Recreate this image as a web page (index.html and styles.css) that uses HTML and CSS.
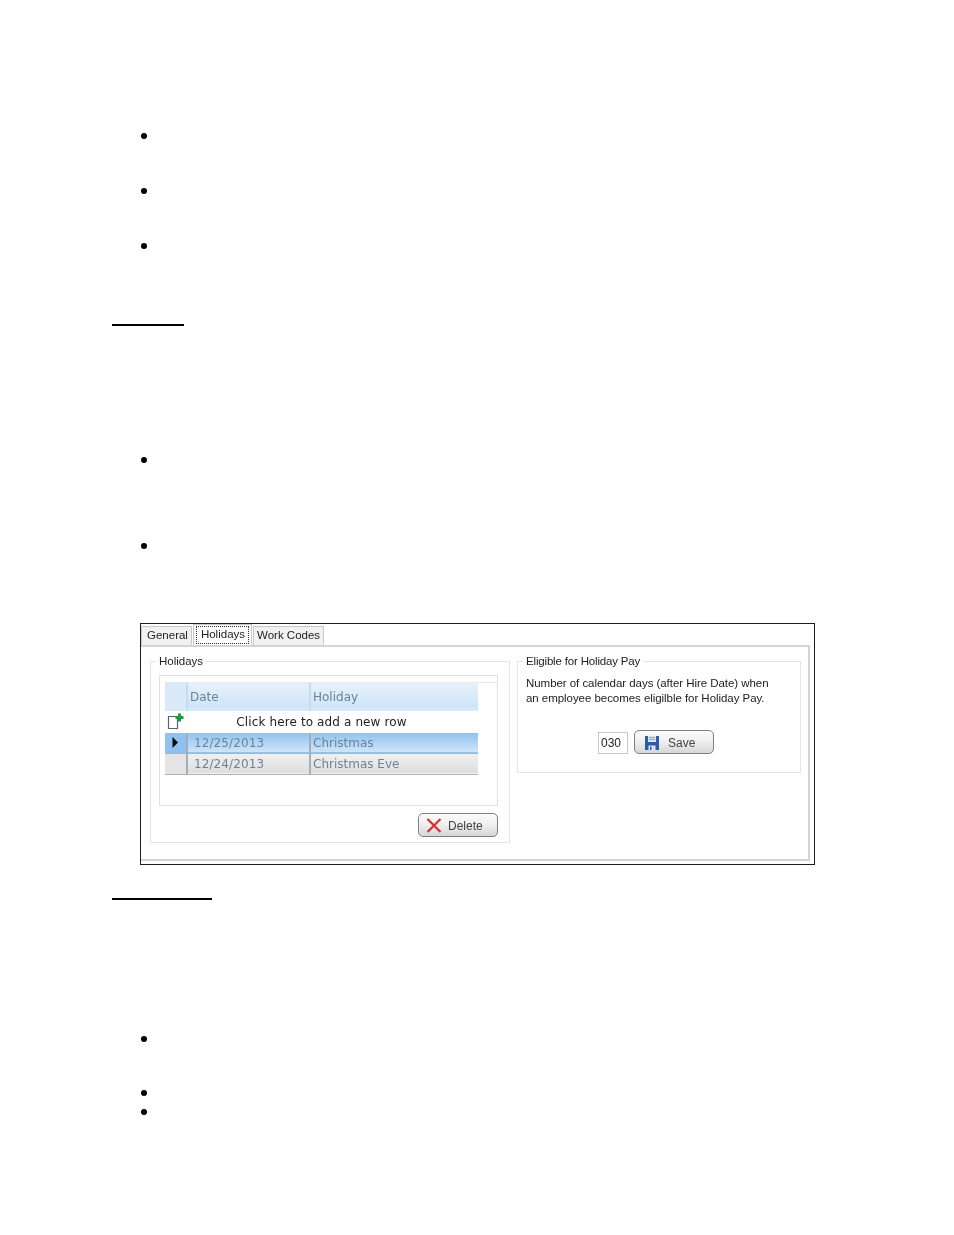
FILE: index.html
```html
<!DOCTYPE html>
<html lang="en">
<head>
  <meta charset="UTF-8">
  <title>Holidays</title>
  <link rel="stylesheet" href="styles.css">
</head>
<body>
  <ul class="bullets first">
    <li></li>
    <li class="wide"></li>
    <li class="wide"></li>
  </ul>

  <div class="rule rule-short"></div>

  <ul class="bullets second">
    <li></li>
    <li class="wider"></li>
  </ul>

  <div class="shot">
    <div class="tabs">
      <div class="tab">General</div>
      <div class="tab active"><span class="focus">Holidays</span></div>
      <div class="tab last">Work Codes</div>
    </div>

    <div class="pane">
      <fieldset class="group group-left">
        <legend>Holidays</legend>
        <div class="grid-box">
          <div class="grid-band"></div>
          <table class="grid">
            <tr class="head">
              <td class="sel"></td>
              <td class="date">Date</td>
              <td>Holiday</td>
            </tr>
            <tr class="add">
              <td class="sel">
                <svg width="17" height="17" viewBox="0 0 17 17">
                  <path d="M1.500 3.500h9v12h-9z" fill="#fff" stroke="#50667e" stroke-width="1.200"/>
                  <path d="M11 0.500h3v2.500h2.500v3H14v2.500h-3V6H8.500V3H11z" fill="#1c9a3c"/>
                </svg>
              </td>
              <td colspan="2">Click here to add a new row</td>
            </tr>
            <tr class="row current">
              <td class="sel">
                <svg width="7" height="11" viewBox="0 0 7 11"><path d="M0.500 0l5.500 5.500-5.500 5.500z" fill="#0b0b0b"/></svg>
              </td>
              <td class="date">12/25/2013</td>
              <td>Christmas</td>
            </tr>
            <tr class="row">
              <td class="sel"></td>
              <td class="date">12/24/2013</td>
              <td>Christmas Eve</td>
            </tr>
          </table>
        </div>
        <div class="actions">
          <button class="btn btn-delete" type="button">
            <svg width="16" height="15" viewBox="0 0 16 15">
              <path d="M1.500 1l13 13M14.500 1l-13 13" stroke="#d5322e" stroke-width="2.200" fill="none"/>
            </svg>
            Delete
          </button>
        </div>
      </fieldset>

      <fieldset class="group group-right">
        <legend>Eligible for Holiday Pay</legend>
        <p class="note">Number of calendar days (after Hire Date) when<br>an employee becomes eligilble for Holiday Pay.</p>
        <div class="pay-row">
          <div class="days">030</div>
          <button class="btn btn-save" type="button">
            <svg width="16" height="16" viewBox="0 0 16 16">
              <path d="M1 1h14v14H1z" fill="#2a5cab"/>
              <path d="M4 1h8v6H4z" fill="#dfe6f2"/>
              <path d="M5 2.500h6M5 4.500h6" stroke="#8ea3c6"/>
              <path d="M4.500 10.500h7V15h-7z" fill="#dfe5ef"/>
              <path d="M6 11.500h1.500V15H6z" fill="#2a5cab"/>
            </svg>
            Save
          </button>
        </div>
      </fieldset>
    </div>
  </div>

  <div class="rule rule-long"></div>

  <ul class="bullets third">
    <li></li>
    <li class="wide-less"></li>
    <li class="tight"></li>
  </ul>
</body>
</html>
```

FILE: styles.css
```css
* {
  box-sizing: border-box;
}

body {
  margin: 0;
  padding: 133px 0 0 112px;
  height: 1235px;
  background: #fff;
  color: #222;
  font-family: "Liberation Sans", Arial, sans-serif;
  font-size: 11.5px;
  overflow: hidden;
}

/* bullets: their text is blank in the page */
.bullets {
  list-style: none;
  margin: 0;
  padding: 0 0 0 29px;
}

.bullets li {
  width: 6px;
  height: 6px;
  margin-top: 48px;
  border-radius: 50%;
  background: #000;
}

.bullets li:first-child {
  margin-top: 0;
}

.bullets li.wide {
  margin-top: 49px;
}

.bullets li.wider {
  margin-top: 80px;
}

.bullets li.wide-less {
  margin-top: 48px;
}

.bullets li.tight {
  margin-top: 13px;
}

.second {
  margin-top: 131px;
}

.third {
  margin-top: 136px;
}

.rule {
  height: 2px;
  background: #000;
}

.rule-short {
  width: 72px;
  margin-top: 75px;
}

.rule-long {
  width: 100px;
  margin-top: 33px;
}

/* app screenshot */
.shot {
  width: 675px;
  height: 242px;
  margin: 74px 0 0 28px;
  border: 1px solid #1c1c1c;
}

.tabs,
.pane {
  filter: blur(0.3px);
}

.tabs {
  display: flex;
  align-items: flex-end;
  height: 21px;
}

.tab {
  height: 19px;
  margin-right: 1px;
  padding: 2px 3px 0 5px;
  border: 1px solid #c9c9c9;
  border-bottom: 0;
  background: #f1f1f1;
  color: #222;
}

.tab.last {
  padding: 2px 3px 0;
}

.tab.active {
  height: 22px;
  margin-bottom: -1px;
  padding: 1px 2px 0;
  background: #fff;
  position: relative;
  z-index: 1;
}

.focus {
  display: block;
  height: 18px;
  padding: 1px 3px 0 4px;
  border: 1px dotted #333;
}

.pane {
  display: flex;
  align-items: flex-start;
  gap: 7px;
  width: 669px;
  height: 216px;
  padding: 7px 0 0 9px;
  border: 2px solid #d4d4d4;
  border-left: 0;
}

.group {
  margin: 0;
  min-width: 0;
  padding: 7px 11px 6px 8px;
  border: 1px solid #e2e4e6;
}

.group legend {
  margin-left: -3px;
  padding: 0 3px;
  color: #222;
  line-height: 14px;
}

.group-left {
  width: 360px;
  height: 189px;
}

.group-right {
  width: 284px;
  height: 119px;
}

.group-right legend {
  letter-spacing: -0.17px;
}

.grid-box {
  height: 131px;
  padding-left: 5px;
  border: 1px solid #dfe1e3;
}

.grid-band {
  height: 7px;
  border-bottom: 1px solid #e6e8ea;
}

.grid {
  width: 313px;
  border-collapse: collapse;
  table-layout: fixed;
  font-family: "DejaVu Sans", sans-serif;
  font-size: 12px;
  color: #6d8299;
}

.grid td {
  padding: 0 2px;
  border-left: 2px solid transparent;
  white-space: nowrap;
}

.grid .sel {
  width: 22px;
  padding: 0;
  border-left: 0;
  text-align: center;
}

.grid .date {
  width: 123px;
}

.head {
  height: 28px;
  background: linear-gradient(#e6f1fb, #cfe5f8 85%, #d9ecfb);
}

.head td {
  border-left-color: #c6dcec !important;
}

.head .sel {
  background: #dbeaf8;
}

.add {
  height: 22px;
  color: #222;
  text-align: center;
}

.grid .add td {
  padding-right: 25px;
  letter-spacing: 0.12px;
}

.grid .add .sel {
  padding: 0;
}

.add svg {
  display: block;
  margin: -1px 0 0 2px;
}

.row {
  height: 21px;
  background: linear-gradient(#f1f1f1, #dedede);
  border-bottom: 1px solid #a9b6c0;
}

.row.current {
  height: 20px;
  background: linear-gradient(#90c3ef, #cfe5f8);
}

.row td {
  border-left-color: #9fb0bd;
}

.row .date {
  padding-left: 6px;
  letter-spacing: 0.1px;
}

.row .sel {
  background: #e4e4e4;
}

.row.current .sel {
  background: #8fc2f0;
}

.row .sel svg {
  display: block;
  margin: 0 0 0 7px;
}

.actions {
  display: flex;
  justify-content: flex-end;
  margin-top: 7px;
}

.btn {
  display: flex;
  align-items: center;
  width: 80px;
  height: 24px;
  border: 1px solid #808080;
  border-radius: 5px;
  background: linear-gradient(#fbfbfb, #f0f0f0 45%, #d6d6d6);
  color: #444;
  font-family: "Liberation Sans", Arial, sans-serif;
  font-size: 12px;
}

.btn-delete {
  gap: 6px;
  padding: 1px 0 0 7px;
}

.btn-save {
  gap: 8px;
  padding: 1px 0 0 9px;
}

.note {
  margin: 1px 0 0;
  color: #222;
  line-height: 15px;
  letter-spacing: -0.05px;
  white-space: nowrap;
}

.pay-row {
  display: flex;
  align-items: flex-end;
  gap: 6px;
  margin: 24px 0 0 72px;
}

.days {
  width: 30px;
  height: 22px;
  padding: 3px 0 0 2px;
  border: 1px solid #c8c8c8;
  color: #222;
  font-size: 12px;
}
```
